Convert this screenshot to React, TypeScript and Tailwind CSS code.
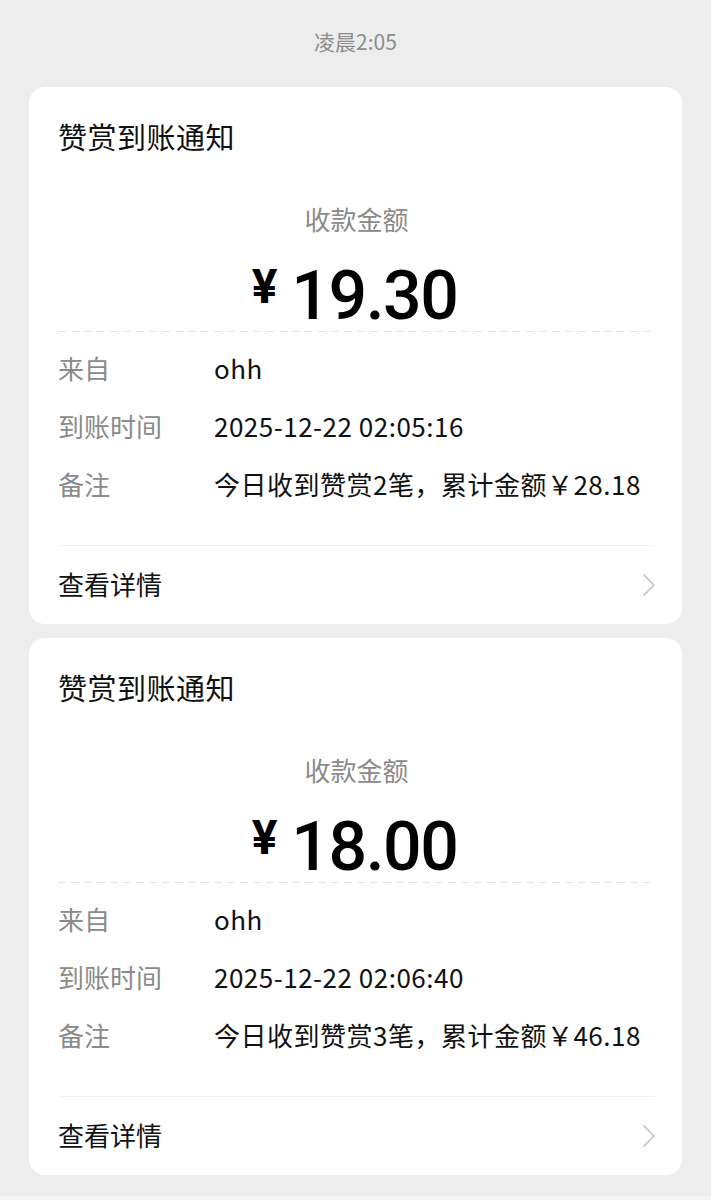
const cards = [
  {
    amount: '19.30',
    from: 'ohh',
    time: '2025-12-22 02:05:16',
    note: '今日收到赞赏2笔，累计金额￥28.18',
  },
  {
    amount: '18.00',
    from: 'ohh',
    time: '2025-12-22 02:06:40',
    note: '今日收到赞赏3笔，累计金额￥46.18',
  },
]

const cjk = { fontFamily: '"Noto Sans CJK SC", "Noto Sans", sans-serif' }
const num = { fontFamily: 'Roboto, "Noto Sans CJK SC", sans-serif' }

const Row = ({ label, value }: { label: string; value: string }) => (
  <div className="flex h-[58px] items-center text-[26px] leading-none">
    <span className="w-[156px] shrink-0 text-[#8a8a8a]">{label}</span>
    <span className="whitespace-nowrap tracking-[0.5px] text-[#111]">{value}</span>
  </div>
)

const Card = ({ data }: { data: (typeof cards)[number] }) => (
  <div className="rounded-[16px] bg-white pl-[29px] pr-[27px]">
    <p className="pt-[29px] text-[29px] leading-[40px] tracking-[0.5px] text-[#111]">
      赞赏到账通知
    </p>
    <p className="mt-[45px] text-center text-[26px] leading-[36px] text-[#8a8a8a]">
      收款金额
    </p>
    <div className="mt-[25px] flex items-start justify-center pr-[4px] text-[#000]" style={num}>
      <span className="mr-[14px] mt-[1px] text-[48px] font-bold leading-none">¥</span>
      <span className="text-[68px] font-medium leading-none tracking-[-1.5px]">{data.amount}</span>
    </div>
    <div className="mt-px h-px bg-[repeating-linear-gradient(90deg,#e4e4e4_0_8px,transparent_8px_13px)]" />
    <div className="mt-[7px]">
      <Row label="来自" value={data.from} />
      <Row label="到账时间" value={data.time} />
      <Row label="备注" value={data.note} />
    </div>
    <div className="mt-[32px] h-px bg-[#f0f0f0]" />
    <div className="flex h-[78px] items-center justify-between">
      <span className="mt-[-2px] text-[26px] leading-none text-[#111]">查看详情</span>
      <svg width="14" height="24" viewBox="0 0 14 24" fill="none" className="mr-[-1px]">
        <path d="M2 2l10 10-10 10" stroke="#cfcfcf" strokeWidth="2" strokeLinecap="round" strokeLinejoin="round" />
      </svg>
    </div>
  </div>
)

export default function App() {
  return (
    <div className="flex min-h-[1200px] flex-col bg-[#ededed]" style={cjk}>
      <p className="pt-[28px] text-center text-[21px] leading-[26px] text-[#8c8c8c]">凌晨2:05</p>
      <div className="mx-[29px] mt-[33px] flex flex-col gap-[14px]">
        {cards.map((c) => (
          <Card key={c.time} data={c} />
        ))}
      </div>
      <div className="mt-auto h-[4px] bg-[#f4f4f4]" />
    </div>
  )
}
